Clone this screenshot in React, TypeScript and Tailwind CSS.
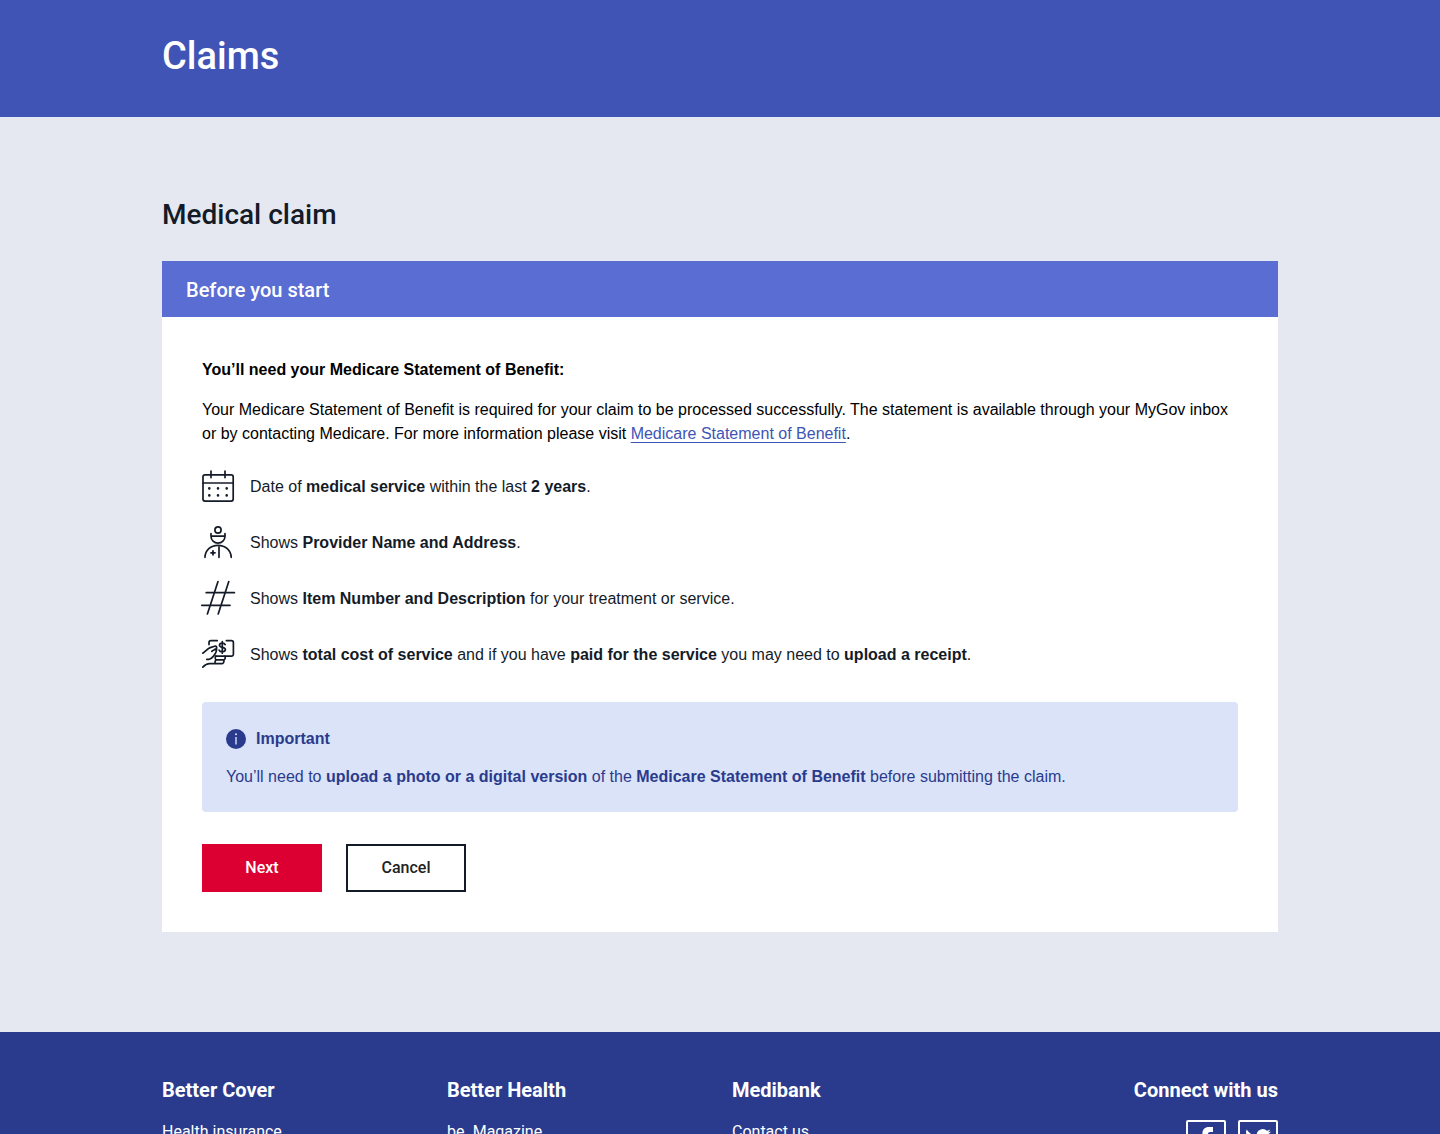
import type { ReactNode } from "react";

const REQUIREMENTS: { id: string; icon: ReactNode; text: ReactNode }[] = [
  {
    id: "date",
    icon: <CalendarIcon />,
    text: <>Date of <strong>medical service</strong> within the last <strong>2 years</strong>.</>,
  },
  {
    id: "provider",
    icon: <ProviderIcon />,
    text: <>Shows <strong>Provider Name and Address</strong>.</>,
  },
  {
    id: "item",
    icon: <HashIcon />,
    text: <>Shows <strong>Item Number and Description</strong> for your treatment or service.</>,
  },
  {
    id: "cost",
    icon: <PaymentIcon />,
    text: (
      <>
        Shows <strong>total cost of service</strong> and if you have <strong>paid for the service</strong> you may need
        to <strong>upload a receipt</strong>.
      </>
    ),
  },
];

const FOOTER_COLUMNS = [
  { title: "Better Cover", links: ["Health insurance"] },
  { title: "Better Health", links: ["be. Magazine"] },
  { title: "Medibank", links: ["Contact us"] },
];

function LineIcon({ children }: { children: ReactNode }) {
  return (
    <svg
      viewBox="0 0 32 32"
      className="h-8 w-8 shrink-0 overflow-visible text-[#141b28]"
      fill="none"
      stroke="currentColor"
      strokeWidth="1.7"
      strokeLinecap="round"
      strokeLinejoin="round"
      aria-hidden="true"
    >
      {children}
    </svg>
  );
}

function CalendarIcon() {
  return (
    <LineIcon>
      <rect x="1" y="3.9" width="30.2" height="26.2" rx="2" />
      <path d="M1 12h30.2M9 0v6.6M23 0v6.6" />
      <path d="M7.3 17.4h.01M16 17.4h.01M24.7 17.4h.01M7.3 24.4h.01M16 24.4h.01M24.7 24.4h.01" strokeWidth="2.6" />
    </LineIcon>
  );
}

function ProviderIcon() {
  return (
    <LineIcon>
      <circle cx="16" cy="3" r="3.1" />
      <path d="M9 6.6v2.6a7 6.9 0 0 0 14 0V6.6M9 9.2h14" />
      <path d="M3 30.3C3.2 23.2 8.6 18.4 16 18.4s12.9 4.8 13.2 11.9M17 18.6v11.7" />
      <path d="M11 23.8v4M9 25.8h4" strokeWidth="1.8" />
    </LineIcon>
  );
}

function HashIcon() {
  return (
    <LineIcon>
      <path d="M16 -1.4 5.4 31M26.8 -1.4 16.2 31M4.2 9.7h28.2M-.2 22.3h28.2" />
    </LineIcon>
  );
}

function PaymentIcon() {
  return (
    <LineIcon>
      <path d="M7 5.6V3.7a2 2 0 0 1 2-2h6.2M24.4 1.7h5a2 2 0 0 1 2 2v11.5a2 2 0 0 1-2 2H13.6" />
      <path d="M23.2 5.6c-.5-1-1.500-1.500-2.900-1.500-1.600 0-2.800.8-2.800 2.100 0 3 5.900 1.400 5.900 4.400 0 1.400-1.300 2.200-3.100 2.200-1.500 0-2.700-.6-3.200-1.700M20.300 2.600v11.600" />
      <path d="M.8 14.200C3 12.700 5.600 9.600 8.200 8.600l4.400-1.400c1.900-.5 2.900 1.500 1.400 2.600-1.300.9-3.200 1.400-4.200 2.600M14.600 9.400c.3 3.500-1.400 5.800-3 7.600-1.600 1.800-2.600 3.200-4.600 3.400H4.800" />
      <path d="M13.900 17.200c-1.100 1.100-.8 3.100.4 3.700-1.600.8-1.700 3-.5 3.800M22.800 17.200c.8 1.100.5 3-.9 3.700.4 2-.6 3.800-2.200 3.800H7.400c-2.800 0-4.700 1.600-6.600 3.500M14.300 20.900h7.600" />
    </LineIcon>
  );
}

function InfoIcon() {
  return (
    <svg viewBox="0 0 20 20" className="h-5 w-5 shrink-0" aria-hidden="true">
      <circle cx="10" cy="10" r="10" fill="#2a3b8d" />
      <circle cx="10" cy="5.2" r="1" fill="#dae3f8" />
      <path d="M10 8v7.6" stroke="#dae3f8" strokeWidth="1.4" />
    </svg>
  );
}

function SocialLink({ label, children }: { label: string; children: ReactNode }) {
  return (
    <a href="#" aria-label={label} className="grid h-10 w-10 place-items-center rounded-xs border-2 border-white">
      <svg viewBox="0 0 28 28" className="h-7 w-7" fill="currentColor" aria-hidden="true">
        {children}
      </svg>
    </a>
  );
}

export default function App() {
  return (
    <div className="min-h-screen bg-[#e5e8f1] font-['Liberation_Sans',Arial,sans-serif] text-base text-[#141b28]">
      <header className="bg-[#4054b5] px-6 pt-8 pb-[37px] text-white">
        <h1 className="mx-auto max-w-[1116px] font-[Roboto,sans-serif] text-[38px] leading-12 font-medium">Claims</h1>
      </header>

      <main className="px-6 pt-[78px] pb-25">
        <div className="mx-auto max-w-[1116px]">
          <h2 className="font-[Roboto,sans-serif] text-[28px] leading-10 font-medium">Medical claim</h2>

          <section className="mt-[26px] bg-white">
            <h3 className="bg-[#5a6dd3] px-6 pt-[13px] pb-[11px] font-[Roboto,sans-serif] text-xl leading-8 font-medium text-white">
              Before you start
            </h3>

            <div className="px-10 pt-[41px] pb-10">
              <h4 className="leading-6 font-bold text-black">You’ll need your Medicare Statement of Benefit:</h4>
              <p className="mt-4 leading-6 text-black">
                Your Medicare Statement of Benefit is required for your claim to be processed successfully. The
                statement is available through your MyGov inbox or by contacting Medicare. For more information please
                visit{" "}
                <a href="#" className="text-[#4054b5] underline underline-offset-3">
                  Medicare Statement of Benefit
                </a>
                .
              </p>

              <ul className="mt-[25px] space-y-6">
                {REQUIREMENTS.map((r) => (
                  <li key={r.id} className="flex items-center gap-4">
                    {r.icon}
                    <span>{r.text}</span>
                  </li>
                ))}
              </ul>

              <div className="mt-[31px] rounded-sm bg-[#dae3f8] px-6 pt-[25px] pb-[23px] text-[#2a3b8d]">
                <h4 className="flex items-center gap-[10px] leading-6 font-bold">
                  <InfoIcon /> Important
                </h4>
                <p className="mt-[14px] leading-6">
                  You’ll need to <strong>upload a photo or a digital version</strong> of the{" "}
                  <strong>Medicare Statement of Benefit</strong> before submitting the claim.
                </p>
              </div>

              <div className="mt-8 flex gap-6 font-[Roboto,sans-serif] font-medium">
                <button type="button" className="h-12 w-30 bg-[#dc0032] text-white">
                  Next
                </button>
                <button type="button" className="h-12 w-30 border-2 border-[#141b28] bg-white text-[#222222]">
                  Cancel
                </button>
              </div>
            </div>
          </section>
        </div>
      </main>

      <footer className="bg-[#2a3b8d] px-6 pt-[42px] pb-12 font-[Roboto,sans-serif] text-white">
        <div className="mx-auto grid max-w-[1116px] grid-cols-4 gap-6">
          {FOOTER_COLUMNS.map((col) => (
            <div key={col.title}>
              <h3 className="text-xl leading-8 font-bold">{col.title}</h3>
              <ul className="mt-[14px]">
                {col.links.map((link) => (
                  <li key={link}>
                    <a href="#">{link}</a>
                  </li>
                ))}
              </ul>
            </div>
          ))}
          <div className="flex flex-col items-end">
            <h3 className="text-xl leading-8 font-bold">Connect with us</h3>
            <div className="mt-[14px] flex gap-3">
              <SocialLink label="Facebook">
                <path d="M10.400 27V16H7v-5h3.400V7.800C10.400 3.400 12.800 1 17 1h4v5h-2.600c-1.800 0-2.400.8-2.400 2.400V11h4.800l-.7 5H16v11z" />
              </SocialLink>
              <SocialLink label="Twitter">
                <path d="M27 5.400c-.9.4-1.800.7-2.900.8 1-.7 1.700-1.600 2.100-2.700-1 .6-2 1-3.200 1.200A6.200 6.200 0 0 0 12.600 9.800C8.500 9.600 5.200 7.200 2.700 3.500c-1.400 2.500-.7 5.400 1.500 7-.8 0-1.600-.3-2.300-.6 0 2.500 1.700 4.600 4.100 5.200-.8.2-1.500.2-2.300.1.600 2.100 2.500 3.600 4.800 3.600A10.500 10.500 0 0 1 1 21.200 15 15 0 0 0 24.400 8c1-.7 1.900-1.600 2.600-2.600z" />
              </SocialLink>
            </div>
          </div>
        </div>
      </footer>
    </div>
  );
}
